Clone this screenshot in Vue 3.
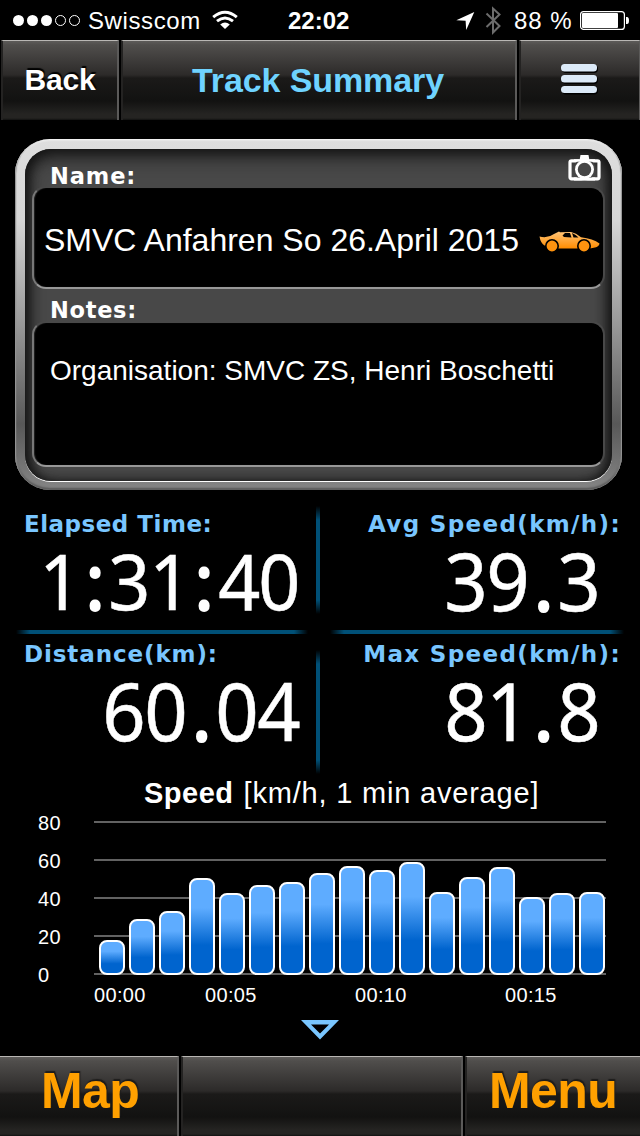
<script setup>
const bars = [35.5, 56, 64, 97, 82, 90.5, 93, 102.5, 109, 105, 113, 83.5, 98.5, 108, 78.5, 82, 83]
const ticks = [80, 60, 40, 20, 0]
const metrics = [
  { label: 'Elapsed Time:', value: '1:31:40', kind: 'elapsed' },
  { label: 'Avg Speed(km/h):', value: '39.3', kind: 'right' },
  { label: 'Distance(km):', value: '60.04', kind: 'left' },
  { label: 'Max Speed(km/h):', value: '81.8', kind: 'right' },
]
const isDigit = (c) => c >= '0' && c <= '9'
</script>

<template>
  <div class="screen">
    <div class="status">
      <svg class="dots" width="68" height="40" viewBox="0 0 68 40">
        <g fill="#fff"><circle cx="5.5" cy="20.5" r="5.5" /><circle cx="19.5" cy="20.5" r="5.5" /><circle cx="33.5" cy="20.5" r="5.5" /></g>
        <g fill="none" stroke="#fff"><circle cx="47.5" cy="20.5" r="5" /><circle cx="61.5" cy="20.5" r="5" /></g>
      </svg>
      <span class="carrier">Swisscom</span>
      <svg class="wifi" width="26" height="40" viewBox="0 0 26 40">
        <g fill="none" stroke="#fff" stroke-width="3">
          <path d="M1.2 17.2Q13 7.3 24.8 17.2" />
          <path d="M5 21.2Q13 14.8 21 21.2" />
        </g>
        <path d="M8.2 24.4Q13 20.8 17.8 24.4L13 29Z" fill="#fff" />
      </svg>
      <span class="clock">22:02</span>
      <svg class="loc" width="20" height="40" viewBox="0 0 20 40"><path d="M18.3 12L0.3 20.2L9.6 20.8L10.2 30Z" fill="#fff" /></svg>
      <svg class="bt" width="18" height="40" viewBox="0 0 18 40"><path d="M1.5 13.5L14.5 26L8 32.5V8.500L14.5 14.500L1.500 27" fill="none" stroke="#6c6c6c" stroke-width="2" /></svg>
      <span class="pct">88 %</span>
      <svg class="battery" width="50" height="40" viewBox="0 0 50 40">
        <rect x="0.600" y="11.600" width="43.800" height="17.800" rx="3" fill="none" stroke="#fff" stroke-width="1.2" />
        <rect x="2" y="13" width="36" height="15" rx="1" fill="#fff" /><path d="M46 17h1q2 0 2 3.500t-2 3.500h-1z" fill="#fff" />
      </svg>
    </div>

    <div class="bar top">
      <div class="cell back"><span>Back</span></div>
      <div class="cell title"><span>Track Summary</span></div>
      <div class="cell burger">
        <svg width="38" height="32" viewBox="0 0 38 32">
          <g fill="#000"><rect x="2" y="2" width="36" height="8" rx="4" /><rect x="2" y="13" width="36" height="8" rx="4" /><rect x="2" y="24" width="36" height="7.500" rx="4" /></g>
          <g fill="#dceaf8"><rect x="1" y="1" width="36" height="7.500" rx="3.500" /><rect x="1" y="12" width="36" height="7.500" rx="3.500" /><rect x="1" y="23" width="36" height="7" rx="3.500" /></g>
        </svg>
      </div>
    </div>

    <div class="panel">
      <div class="inner">
        <div class="heading">
          <span>Name:</span>
          <svg width="34" height="28" viewBox="0 0 34 28">
            <rect x="2" y="6.800" width="29" height="18" rx="1.500" fill="none" stroke="#fff" stroke-width="3.200" />
            <circle cx="16.500" cy="15.500" r="11" fill="#454545" />
            <path d="M12.500 1h8l1 5.500h-10zM6 5.200h21v2.500H6zM6 23.400h21v3H6z" fill="#fff" />
            <circle cx="16.500" cy="15.500" r="9.500" fill="#fff" /><circle cx="16.500" cy="15.500" r="6.700" fill="#454545" />
          </svg>
        </div>
        <div class="box name">
          <span>SMVC Anfahren So 26.April 2015</span>
          <svg width="62" height="22" viewBox="0 0 62 22">
            <defs><linearGradient id="paint" x1="0" y1="0" x2="0" y2="1"><stop offset="0" stop-color="#ffc477" /><stop offset="1" stop-color="#ff8c00" /></linearGradient></defs>
            <path d="M0.500 5.500Q8 8 15 3L18.500 1.200L20 .500L21 1.200L32 1Q37 2 42 6.200Q54 7.500 60.500 12.500Q60 15.500 56 16.500L51 17.500H19L5.500 14.500Q1.500 12 0.500 5.500Z" fill="url(#paint)" />
            <path d="M23.500 4.500L26 2H31L32.500 6.500L25 6ZM33 2Q37 3.500 39.500 6.500H34.500Z" fill="#000" />
            <g fill="#ff930f" stroke="#000" stroke-width="1.600"><circle cx="13" cy="15" r="6.200" /><circle cx="45" cy="15" r="6.200" /></g>
          </svg>
        </div>
        <div class="heading notes-heading"><span>Notes:</span></div>
        <div class="box notes"><span>Organisation: SMVC ZS, Henri Boschetti</span></div>
      </div>
    </div>

    <div class="metrics">
      <div v-for="m in metrics" :key="m.label" class="metric" :class="m.kind">
        <div class="label">{{ m.label }}</div>
        <div class="value"><span v-for="(c, i) in m.value" :key="i" :class="isDigit(c) ? 'digit' : 'punct'">{{ c }}</span></div>
      </div>
      <i class="rule v v1"></i><i class="rule v v2"></i><i class="rule h h1"></i><i class="rule h h2"></i>
    </div>

    <div class="chart-title"><b>Speed</b> <span>[km/h, 1 min average]</span></div>
    <div class="chart">
      <div class="yaxis"><span v-for="t in ticks" :key="t">{{ t }}</span></div>
      <div class="plot">
        <div class="lines"><i v-for="t in ticks" :key="t"></i></div>
        <div class="bars"><i v-for="(b, i) in bars" :key="i" :style="{ height: b + 'px' }"></i></div>
      </div>
    </div>
    <div class="xaxis"><span>00:00</span><span>00:05</span><span>00:10</span><span>00:15</span></div>
    <svg class="more" width="40" height="20" viewBox="0 0 40 20"><path d="M1 0H39L20 19.500ZM11 4.500L20 13.500L29 4.500Z" fill="#79c6ff" fill-rule="evenodd" /></svg>

    <div class="bar bottom">
      <div class="cell map"><span>Map</span></div>
      <div class="cell gap"></div>
      <div class="cell menu"><span>Menu</span></div>
    </div>
  </div>
</template>

<style>
body { margin: 0; background: #000; }
</style>

<style scoped>
* { box-sizing: border-box; }
svg { display: block; flex: none; }
.screen { width: 640px; height: 1136px; background: #000; color: #fff; font-family: "Liberation Sans", Arial, sans-serif; display: flex; flex-direction: column; overflow: hidden; white-space: nowrap; }
.status { height: 40px; flex: none; display: flex; line-height: 41px; font-size: 24px; padding-left: 13px; }
.carrier { width: 124px; margin-left: 7px; letter-spacing: .6px; }
.clock { width: 62px; margin-left: 50px; font-weight: 700; }
.loc { margin-left: 106px; }
.bt { margin-left: 9px; }
.pct { width: 59px; margin-left: 11px; letter-spacing: 1px; }
.battery { margin-left: 7px; }

.bar { height: 80px; flex: none; display: flex; gap: 2px; }
.cell { height: 80px; border-top: 1px solid #b9b7b4; border-right: 2px solid #5b5a59; border-left: 2px solid #242322; font-weight: 700; background: linear-gradient(#5d5b59 0, #504e4c 4px, #2c2a29 34px, #1b1a19 37px, #121211 60px, #252422 73px, #252422 77px, #111 79px); }
.top { padding-left: 1px; }
.back { width: 118px; font-size: 30px; line-height: 77px; padding-left: 21.500px; letter-spacing: -.2px; text-shadow: 1px -2px 1px #000; }
.title { width: 396px; font-size: 34px; line-height: 79px; color: #6fd3ff; text-align: center; letter-spacing: -.1px; }
.title span { margin-left: -2px; }
.burger { width: 121px; padding: 22px 0 0 39px; border-right-width: 1px; }

.panel { width: 607px; height: 351px; flex: none; margin: 19px 0 0 15px; padding: 10px; border-radius: 35px; background: linear-gradient(#dedede 0, #d6d6d6 80px, #9c9c9c 180px, #585858 285px, #858585 350px); box-shadow: inset 0 1px 2px #fff, inset 0 -2px 2px #555, inset 1px 0 1px #777, inset -1px 0 1px #777; }
.inner { height: 332px; border-radius: 26px; background: #484848; padding: 16px 7px 0 7px; box-shadow: inset 0 7px 18px #151515, inset 7px 0 11px -3px #181818, inset -7px 0 11px -3px #181818, 0 1px 0 #fff; }
.heading { height: 20.500px; display: flex; justify-content: space-between; padding: 0 3.500px 0 18px; font: 700 22.500px/22px "DejaVu Sans", Verdana, sans-serif; letter-spacing: .9px; }
.heading svg { margin-top: -11px; }
.notes-heading { height: 32px; line-height: 42px; letter-spacing: .7px; }
.box { width: 573px; background: #000; border: 2px solid #484848; border-bottom-color: #989898; border-radius: 14px; box-shadow: inset 1px 0 1px #222; border-left-color: #777; }
.name { height: 103px; display: flex; font-size: 32px; line-height: 104px; padding-left: 10px; }
.name span { width: 495px; }
.name svg { margin-top: 43px; }
.notes { height: 146px; font-size: 28px; line-height: 95px; padding-left: 16px; }

.metrics { position: relative; height: 286px; flex: none; display: grid; grid-template-columns: 320px 320px; grid-template-rows: 130px 147px; padding-top: 9px; }
.metric { text-align: right; padding: 10px 20px 0 24px; }
.label { font: 700 23px/30px "DejaVu Sans", Verdana, sans-serif; color: #79c6ff; letter-spacing: .5px; }
.left .label { letter-spacing: .9px; }
.right .label { letter-spacing: 1.35px; margin-right: -1px; }
.elapsed .label, .left .label { text-align: left; }
.value { font: 80px/82px "Noto Sans", "Open Sans", sans-serif; height: 82px; display: flex; justify-content: flex-end; }
.elapsed .value { font-size: 77.500px; }
.right .value { padding-right: 20px; }
.value span { display: flex; justify-content: center; flex: none; transform: scaleX(.95); -webkit-text-stroke: .5px #fff; }
.digit { width: .524em; }
.value .punct { width: .367em; -webkit-text-stroke-width: 2px; }
.rule { position: absolute; }
.v { width: 4px; left: 316px; background: linear-gradient(transparent, #005077 14px, #005077 calc(100% - 14px), transparent); }
.v1 { top: 16px; height: 108px; }
.v2 { top: 160px; height: 124px; }
.h { height: 4px; top: 140px; background: linear-gradient(90deg, transparent, #005077 14px, #005077 calc(100% - 14px), transparent); }
.h1 { left: 16px; width: 292px; }
.h2 { left: 330px; width: 294px; }

.chart-title { height: 36px; flex: none; font-size: 29px; line-height: 34px; padding-left: 144px; }
.chart-title b { letter-spacing: .5px; }
.chart-title span { margin-left: 2px; letter-spacing: .8px; }
.chart { height: 164px; flex: none; display: flex; padding-left: 38px; }
.yaxis { width: 56px; font-size: 20px; line-height: 38px; margin-top: -8px; display: flex; flex-direction: column; letter-spacing: .3px; }
.plot { width: 512px; display: grid; height: 154px; margin-top: 9px; }
.lines, .bars { grid-area: 1 / 1; }
.lines { display: flex; flex-direction: column; justify-content: space-between; }
.lines i { height: 2px; background: #626262; }
.bars { display: flex; align-items: flex-end; gap: 4px; padding-left: 5px; }
.bars i { width: 26px; border: 2px solid #fff; border-radius: 8px; background: linear-gradient(#5eacff 30%, #0064ce 70%); }
.xaxis { height: 44px; flex: none; padding-left: 94px; font-size: 20px; line-height: 38px; display: flex; letter-spacing: .35px; }
.xaxis span { width: 150px; flex: none; }
.xaxis span:first-child { width: 111px; }
.more { margin-left: 300px; }
.bottom { margin-top: auto; font-size: 50px; color: #ffa000; line-height: 68px; letter-spacing: -.6px; text-shadow: 1px -2px 1px #1d1c1b; }
.map { width: 179px; border-left-width: 0; padding-left: 41px; }
.gap { width: 282px; }
.menu { width: 175px; padding-left: 22px; border-right: 0; }
</style>
